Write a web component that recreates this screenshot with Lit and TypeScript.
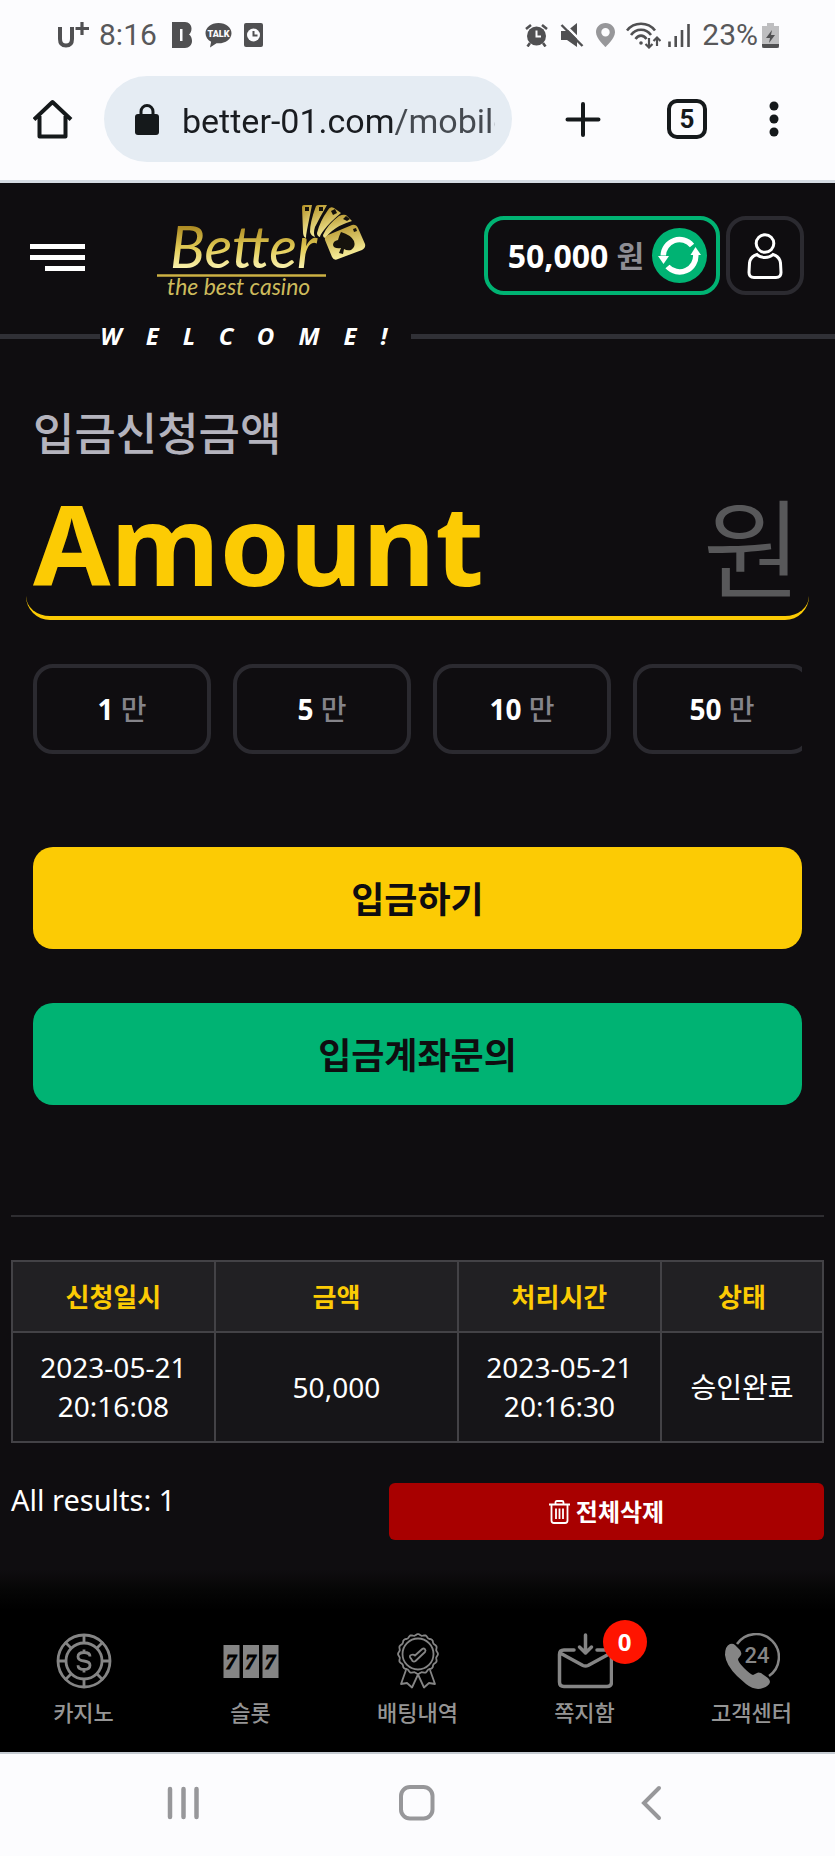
import { LitElement, html, css, svg } from "lit";
import { customElement, property, state } from "lit/decorators.js";

const FONT = css`"Noto Sans", "Noto Sans CJK KR", sans-serif`;

@customElement("phone-status")
class PhoneStatus extends LitElement {
  static styles = css`
    :host { display: block; }
    .bar {
      display: flex; align-items: center; justify-content: space-between;
      height: 70px; padding: 0 56px 0 58px; box-sizing: border-box;
      font: 400 30px/36px Roboto, sans-serif; color: #58585a;
    }
    .group { display: flex; align-items: center; }
    .carrier { margin-right: 10px; }
    .time { margin-right: 15px; }
    .b { margin-right: 13px; }
    .talk { margin-right: 12px; }
    .alarm, .mute { margin-right: 12px; }
    .pin { margin-right: 11px; }
    .wifi { margin-right: 7px; }
    .signal { margin-right: 12px; }
    .percent { margin-right: 4px; }
    svg { display: block; }
  `;
  render() {
    return html`
      <div class="bar">
        <div class="group">
          <svg class="carrier" width="31" height="26" viewBox="0 0 31 26" fill="none" stroke="#505052" stroke-width="4">
            <path d="M2 5v12c0 4 2 6.500 6 6.500s6-2.500 6-6.500V5" /><path d="M24 0v13M17.500 6.500h13.500" stroke-width="3.200" />
          </svg>
          <span class="time">8:16</span>
          <svg class="b" width="20" height="26" viewBox="0 0 20 26" fill="#505052">
            <path fill-rule="evenodd" d="M0 0h13c4 0 6.500 3 6.500 6.500 0 2.800-1 4.800-2.500 6 1.800 1.200 3 3.500 3 6.500 0 4-3 7-7 7H0zM8 7v12h2.500V7z" />
          </svg>
          <svg class="talk" width="27" height="26" viewBox="0 0 27 26">
            <path fill="#505052" d="M13.500 1C6 1 .5 5.500.5 11.200c0 3.600 2.200 6.700 5.600 8.500L5 25.500l6.500-4.300c8 1 15-3.700 15-10C26.500 5.500 21 1 13.500 1z" />
            <text x="13.500" y="15" text-anchor="middle" font-size="9" font-weight="900" font-family="Roboto, sans-serif" fill="#fcfcfe">TALK</text>
          </svg>
          <svg width="19" height="24" viewBox="0 0 19 24">
            <rect width="19" height="24" rx="2" fill="#505052" /><circle cx="9.500" cy="12" r="6.500" fill="#fcfcfe" />
            <path d="M9.500 8v4.500h4" stroke="#505052" stroke-width="2" fill="none" />
          </svg>
        </div>
        <div class="group">
          <svg class="alarm" width="23" height="24" viewBox="0 0 23 24">
            <circle cx="11.500" cy="13" r="9.500" fill="#505052" />
            <path d="M1 6l5-4M22 6l-5-4M5 20l-2.500 3.500M18 20l2.500 3.500" stroke="#505052" stroke-width="2.600" />
            <path d="M11.500 7.500v6h4.500" stroke="#fcfcfe" stroke-width="2" fill="none" />
          </svg>
          <svg class="mute" width="24" height="24" viewBox="0 0 24 24">
            <path fill="#505052" d="M1 8h6l10-8v24L7 17H1z" />
            <path d="M3 0l22 22" stroke="#fcfcfe" stroke-width="2.500" /><path d="M1.500 2l21 21" stroke="#505052" stroke-width="2.400" />
          </svg>
          <svg class="pin" width="19" height="24" viewBox="0 0 19 24">
            <path fill="#97979a" fill-rule="evenodd" d="M9.500 0C4 0 0 4 0 9.200 0 15.500 9.500 24 9.500 24S19 15.500 19 9.200C19 4 15 0 9.500 0zm0 5a4.200 4.200 0 1 1 0 8.400 4.200 4.200 0 0 1 0-8.400z" />
          </svg>
          <svg class="wifi" width="35" height="27" viewBox="0 0 35 27" fill="none" stroke="#505052" stroke-width="2.600">
            <path d="M1 8.500C8-.5 22-.5 29 8.500M5 13c5-7 15-7 20 0M9.500 17c3-4.500 8-4.500 11 0" />
            <circle cx="15" cy="21" r="1.800" fill="#505052" stroke="none" />
            <path d="M23 16v9M19.500 22l3.500 3.500 3.500-3.500M31 24v-8M27.500 19l3.500-3.500 3.500 3.500" stroke-width="2.200" />
          </svg>
          <svg class="signal" width="22" height="24" viewBox="0 0 22 24" stroke="#505052" stroke-width="2.600">
            <path d="M1.500 18.500V24M7.700 13v11M14 7v17M20.500 1v23" />
          </svg>
          <span class="percent">23%</span>
          <svg width="17" height="25" viewBox="0 0 17 25">
            <path fill="#bebec0" d="M5 0h7v3h5v22H0V3h5z" /><path fill="#505052" d="M0 21h17v2a2 2 0 0 1-2 2H2a2 2 0 0 1-2-2zM10 7l-6 8h4l-1 5 6-8H9z" />
          </svg>
        </div>
      </div>
    `;
  }
}

@customElement("browser-toolbar")
class BrowserToolbar extends LitElement {
  static styles = css`
    :host { display: block; }
    .bar {
      display: flex; align-items: center; padding: 6px 41px 18px 33px;
      border-bottom: 3px solid #d5dbe3;
    }
    button {
      display: flex; align-items: center; justify-content: center; flex: none;
      width: 40px; height: 40px; padding: 0; border: 0; background: none;
    }
    svg { display: block; }
    .address {
      display: flex; align-items: center; flex: 1; min-width: 0; height: 86px; box-sizing: border-box;
      margin: 0 51px 0 31px; padding: 0 17px 0 31px; border-radius: 43px; background: #e5ecf3;
    }
    .lock { flex: none; margin-right: 23px; }
    .url {
      flex: 1; min-width: 0; height: 54px; padding: 4px 0 0; border: 0; outline: 0; box-sizing: border-box;
      font: 400 34px/50px Roboto, sans-serif; color: transparent;
      background: linear-gradient(90deg, #191c20 212px, #454a50 212px);
      -webkit-background-clip: text; background-clip: text;
    }
    .plus { margin-right: 64px; }
    .tabs {
      box-sizing: border-box; margin-right: 47px; border: 4px solid #15191b; border-radius: 10px;
      font: 700 26px/32px Roboto, sans-serif; color: #15191b;
    }
  `;
  render() {
    return html`
      <div class="bar">
        <button aria-label="Home">
          <svg width="40" height="40" viewBox="0 0 40 40" fill="none" stroke="#15191b" stroke-width="4" stroke-linejoin="round">
            <path d="M1 20.500L19.500 3 38 20.500M6.500 17v20.500h26V17" />
          </svg>
        </button>
        <label class="address">
          <svg class="lock" width="24" height="31" viewBox="0 0 24 31">
            <rect y="10" width="24" height="21" rx="3" fill="#15191b" />
            <path d="M6 12V7.500a6 6 0 0 1 12 0V12" fill="none" stroke="#15191b" stroke-width="3" />
          </svg>
          <input class="url" type="text" aria-label="Address" .value=${"better-01.com/mobile"} />
        </label>
        <button class="plus" aria-label="New tab">
          <svg width="36" height="36" viewBox="0 0 36 36" stroke="#15191b" stroke-width="4" stroke-linecap="round"><path d="M18 3v31M2.500 18.500h31" /></svg>
        </button>
        <button class="tabs" aria-label="Open tabs">5</button>
        <button aria-label="More">
          <svg width="10" height="36" viewBox="0 0 10 36" fill="#15191b"><circle cx="5" cy="5" r="4.500" /><circle cx="5" cy="18" r="4.500" /><circle cx="5" cy="31" r="4.500" /></svg>
        </button>
      </div>
    `;
  }
}

@customElement("site-logo")
class SiteLogo extends LitElement {
  static styles = css`
    :host { display: block; padding-bottom: 9px; }
    svg { display: block; }
    .name { font: italic 400 58px "Lato", sans-serif; }
    .tag { font: italic 400 23px "Lato", sans-serif; }
  `;
  render() {
    return html`
      <svg width="210" height="98" viewBox="0 0 210 98" role="img" aria-label="Better the best casino">
        <defs>
          <linearGradient id="gold" x1="0" y1="0" x2="0" y2="1">
            <stop offset="0.200" stop-color="#a8851f" /><stop offset="0.550" stop-color="#e3cd58" /><stop offset="0.850" stop-color="#fbf4b4" />
          </linearGradient>
          <linearGradient id="card" x1="0" y1="0" x2="0.300" y2="1">
            <stop offset="0" stop-color="#b08d22" /><stop offset="1" stop-color="#f8ef9c" />
          </linearGradient>
        </defs>
        <text class="name" x="13" y="66" fill="url(#gold)">Better</text>
        <path d="M0 73.500h169" stroke="#cdb143" stroke-width="2.500" />
        <text class="tag" x="10" y="93" fill="#cdbb5c">the best casino</text>
        <g fill="url(#card)">
          <path d="M145 5q0-2 2-2h8l-5 25q-1 5-1 8-3-1-3-6z" />
          <path d="M159 4q1-1 3-1h8q-7 12-12 22-2 6 0 10-4-1-5-5 0-10 6-26z" />
          <path d="M171 8q2-4 6-2l7 5q-11 9-17 17-4 5-4 7-3-1-3-4 3-12 11-23z" />
          <path d="M182 14q4-2 7-1l6 6q-13 4-20 10-5 4-6 7-3 0-3-3 5-11 16-19z" />
          <path d="M171 33q-4 2-3 5l7 17q2 4 6 2l24-9q4-2 3-6l-7-16q-2-4-6-3z" />
        </g>
        <g fill="#15120c">
          <path d="M184 30q10 3 13 9 2 6-3 9-4 1-7-1l-1 5-4-1 2-5q-7 1-8-3 0-4 5-5 1-4 3-8z" />
          <path d="M148 5h4v4h-4zM162 5h4v4h-4zM174 9l4-2 2 4-4 2zM186 17l3-3 4 3-3 2zM196 27l3-1 1 3-3 1z" />
        </g>
      </svg>
    `;
  }
}

@customElement("site-header")
class SiteHeader extends LitElement {
  @property() balance = "50,000";
  static styles = css`
    :host { display: block; font-family: ${FONT}; }
    .row { display: flex; align-items: center; padding: 33px 31px 0 30px; height: 79px; }
    button { padding: 0; border: 0; background: none; font-family: inherit; box-sizing: border-box; }
    svg { display: block; }
    .menu { width: 55px; margin-right: 72px; padding-top: 4px; }
    .balance {
      display: flex; align-items: center; justify-content: flex-end; gap: 8px; width: 236px; height: 79px;
      margin-left: auto; margin-right: 6px; padding-right: 9px;
      border: 4px solid #00b373; border-radius: 20px; font-size: 32px; line-height: 40px; font-weight: 700; color: #fff;
    }
    .unit { font-size: 30px; color: #8e8d94; }
    .user {
      display: flex; align-items: center; justify-content: center; width: 78px; height: 79px;
      border: 4px solid #2b2a30; border-radius: 20px;
    }
    .welcome { display: flex; align-items: center; margin-top: 28px; height: 26px; }
    .welcome::before, .welcome::after { content: ""; height: 5px; background: #303036; }
    .welcome::before { width: 12%; }
    .welcome::after { flex: 1; }
    .text { font-size: 24px; line-height: 26px; font-weight: 700; font-style: italic; letter-spacing: 1em; color: #fff; }
  `;
  render() {
    return html`
      <div class="row">
        <button class="menu" aria-label="Menu">
          <svg width="55" height="27" viewBox="0 0 55 27" fill="#fff"><path d="M0 0h55v5H0zM0 11h55v5H0zM15 22h40v5H15z" /></svg>
        </button>
        <site-logo></site-logo>
        <button class="balance">
          <span>${this.balance}</span><span class="unit">원</span>
          <svg width="55" height="55" viewBox="0 0 55 55">
            <circle cx="27.500" cy="27.500" r="27.500" fill="#00b373" />
            <g fill="none" stroke="#fff" stroke-width="5.500">
              <path d="M11.300 27.500A16.200 16.200 0 0 1 40 17.500" /><path d="M43.700 26A16.200 16.200 0 0 1 15.500 38.500" />
            </g>
            <path fill="#fff" d="M6 28h11l-5.500 8zM38.500 27h10.500l-5.500-8z" />
          </svg>
        </button>
        <button class="user" aria-label="My page">
          <svg width="36" height="46" viewBox="0 0 36 46" fill="none" stroke="#fff" stroke-width="3">
            <circle cx="18" cy="10.500" r="8.800" />
            <path d="M10 21.500c-5 1.500-7 4-7.500 8.500L2 39.500c0 3.500 1.500 5 5 5h22c3.500 0 5-1.500 5-5L33.500 30c-.5-4.500-2.500-7-7.500-8.500-4 4-12 4-16 0z" />
          </svg>
        </button>
      </div>
      <div class="welcome"><span class="text">WELCOME!</span></div>
    `;
  }
}

@customElement("deposit-form")
class DepositForm extends LitElement {
  @state() private amount = "";
  private presets = [1, 5, 10, 50];
  static styles = css`
    :host { display: block; padding: 55px 26px 0; font-family: ${FONT}; }
    .title { display: block; margin: 0 7px; font-size: 45px; line-height: 60px; font-weight: 500; color: #b4b3bd; }
    .field {
      display: flex; align-items: center; height: 156px; box-sizing: border-box; padding: 6px 7px 0;
      border-bottom: 4px solid #fccb04; border-radius: 0 0 24px 24px;
    }
    .amount {
      flex: 1; min-width: 0; height: 146px; padding: 0; border: 0; outline: 0; background: none;
      font: 700 112px/146px ${FONT}; color: #fccb04;
    }
    .amount::placeholder { color: #fccb04; opacity: 1; }
    .won { font: 350 108px/146px "Noto Sans CJK KR", sans-serif; color: #58585a; }
    .presets { display: flex; gap: 22px; margin: 44px 7px 0; overflow: hidden; }
    button { border: 0; padding: 0; font-family: inherit; }
    .preset {
      flex: none; width: 178px; height: 90px; box-sizing: border-box; border: 4px solid #2b2a30; border-radius: 20px;
      background: none; font-size: 28px; line-height: 40px; font-weight: 700; color: #fff;
    }
    .man { font-weight: 500; color: #85848a; }
    .actions { display: flex; flex-direction: column; gap: 54px; margin: 93px 7px 0; }
    .action {
      height: 102px; padding-top: 4px; border-radius: 20px;
      font-size: 36px; line-height: 50px; font-weight: 700; color: #0f0d10;
    }
    .yellow { background: #fccb04; }
    .green { background: #00b373; }
  `;
  render() {
    return html`
      <label class="title" for="amount">입금신청금액</label>
      <div class="field">
        <input class="amount" id="amount" type="text" inputmode="numeric" placeholder="Amount" .value=${this.amount} />
        <span class="won">원</span>
      </div>
      <div class="presets">
        ${this.presets.map((n) => html`
          <button class="preset" @click=${() => (this.amount = (n * 10000).toLocaleString())}>${n} <span class="man">만</span></button>
        `)}
      </div>
      <div class="actions">
        <button class="action yellow">입금하기</button>
        <button class="action green">입금계좌문의</button>
      </div>
    `;
  }
}

@customElement("deposit-history")
class DepositHistory extends LitElement {
  static styles = css`
    :host { display: block; margin: 110px 11px 0; padding-top: 43px; border-top: 2px solid #2e2d31; font-family: ${FONT}; }
    table { width: 100%; border-collapse: collapse; table-layout: fixed; color: #fff; text-align: center; }
    th, td { padding: 0; border: 2px solid #434246; }
    th { height: 69px; background: #212023; font-size: 26px; line-height: 40px; font-weight: 700; color: #fccb04; }
    td { height: 108px; background: #161518; font-size: 28px; line-height: 39px; }
    .c1, .c3 { width: 25%; }
    .c2 { width: 30%; }
    .c4 { width: 20%; }
    .foot { display: flex; align-items: flex-start; justify-content: space-between; margin-top: 40px; color: #fff; }
    .count { font-size: 29px; line-height: 34px; }
    .clear {
      display: flex; align-items: center; justify-content: center; gap: 6px; width: 435px; height: 57px; padding: 0;
      border: 0; border-radius: 6px; background: #a80000; font: 700 24px/36px ${FONT}; color: #fff;
    }
    .when { padding: 0 24px; }
  `;
  render() {
    return html`
      <table>
        <colgroup><col class="c1" /><col class="c2" /><col class="c3" /><col class="c4" /></colgroup>
        <thead><tr><th>신청일시</th><th>금액</th><th>처리시간</th><th>상태</th></tr></thead>
        <tbody><tr>
          <td class="when">2023-05-21 20:16:08</td><td>50,000</td><td class="when">2023-05-21 20:16:30</td><td>승인완료</td>
        </tr></tbody>
      </table>
      <div class="foot">
        <span class="count">All results: 1</span>
        <button class="clear">
          <svg width="21" height="24" viewBox="0 0 21 24" fill="none" stroke="#fff" stroke-width="1.800">
            <path d="M0 4.500h21M6.500 4V2.500Q6.500 1 8 1h5q1.500 0 1.500 1.500V4M2.500 5v15.500Q2.500 23 5 23h11q2.500 0 2.500-2.500V5M7 8.500v10.500M10.500 8.500v10.500M14 8.500v10.500" />
          </svg>
          전체삭제
        </button>
      </div>
    `;
  }
}

const scallop = (() => {
  const pts: string[] = [];
  for (let i = 0; i <= 96; i++) {
    const a = (i / 96) * Math.PI * 2;
    const r = 19.3 + 0.7 * Math.cos(a * 16);
    pts.push(`${(28 + r * Math.cos(a)).toFixed(1)} ${(21 + r * Math.sin(a)).toFixed(1)}`);
  }
  return "M" + pts.join("L") + "Z";
})();

const icons = {
  chip: svg`
    <g fill="none" stroke="#858585" stroke-width="2.800">
      <circle cx="28" cy="28" r="26" /><circle cx="28" cy="28" r="18" />
      <path d="M28 1v9M28 46v9M1 28h9M46 28h9M9 9l6 6M41 41l6 6M9 47l6-6M41 15l6-6" />
      <path d="M34 23.500c0-3-2-4-6-4s-6 1.500-6 4.200 2 3.800 6 4.300 6 1.700 6 4.300-2 4.200-6 4.200-6-1.200-6-4.200M28 16.500V20M28 36v3.500" />
    </g>`,
  slot: svg`
    <path fill="#858585" d="M0.500 12h16v33h-16zM20 12h16v33h-16zM39.500 12h16v33h-16z" />
    <g font-family="'Liberation Serif', serif" font-size="21" font-weight="700" font-style="italic" text-anchor="middle" fill="#000" stroke="#000">
      <text x="8" y="36">7</text><text x="27.500" y="36">7</text><text x="47" y="36">7</text>
    </g>`,
  award: svg`
    <g fill="none" stroke="#858585" stroke-width="1.800" stroke-linejoin="round">
      <path d="${scallop}" /><circle cx="28" cy="21" r="15.500" />
      <path d="M16 37L11 51l6-1 5 4.500 6-13M40 37l5 14-6-1-5 4.500-6-13" />
      <path d="M21 22c-1.500.5-1.500 2 0 3.500l1.500 2.500c1 .8 2 .8 3 0l9.500-9c1.500-2-.8-4.500-2.800-3L25 22.500c-1-1-2.500-1.200-4-.5z" />
    </g>`,
  mail: svg`
    <g fill="none" stroke="#858585" stroke-width="3.500" stroke-linecap="round" stroke-linejoin="round">
      <path d="M17 17H7q-4.500 0-4.500 4.500V49q0 4.500 4.500 4.500h43q4.500 0 4.500-4.500V21.500Q54.500 17 50 17H40M4 20.500l22 12q2.500 1.200 5 0l22-12" />
      <path d="M28.500 2v17M22.500 14l6 6 6-6" />
    </g>`,
  call: svg`
    <path d="M13 11A23 23 0 1 1 45 43" fill="none" stroke="#858585" stroke-width="2.500" />
    <path fill="#858585" d="M6 11q-5 2-5 11 1 10 12 21l9 8q9 7 17 4 6-2 7-6 0-2-2-4l-7-5q-3-1-4 0l-4 2q-3-1-9-7t-6-9l3-4q1-2-1-5l-5-5q-2-2-5-1z" />
    <text x="33" y="30" text-anchor="middle" font-family="Roboto, sans-serif" font-size="22" font-weight="500" fill="#858585">24</text>`,
};

@customElement("bottom-nav")
class BottomNav extends LitElement {
  private items = [
    { label: "카지노", icon: icons.chip },
    { label: "슬롯", icon: icons.slot },
    { label: "배팅내역", icon: icons.award },
    { label: "쪽지함", icon: icons.mail, badge: "0" },
    { label: "고객센터", icon: icons.call },
  ];
  static styles = css`
    :host { display: block; margin-top: 30px; font-family: ${FONT}; }
    nav {
      display: grid; grid-template-columns: repeat(5, 1fr); padding: 63px 0 24px;
      background: linear-gradient(#0f0d10, #060606 20px, #000 40px);
      border-bottom: 2px solid #c5cbd2;
    }
    a { display: flex; flex-direction: column; align-items: center; color: #959595; text-decoration: none; }
    .icon { position: relative; display: block; width: 56px; height: 56px; }
    .label { margin-top: 7px; font-size: 22px; line-height: 32px; font-weight: 500; }
    .badge {
      position: absolute; top: -13px; right: -34px; width: 44px; height: 44px; border-radius: 50%;
      background: #ff1400; color: #fff; font-size: 24px; line-height: 44px; font-weight: 700; text-align: center;
    }
  `;
  render() {
    return html`
      <nav>
        ${this.items.map((it) => html`
          <a href="#">
            <span class="icon">
              <svg width="56" height="56" viewBox="0 0 56 56">${it.icon}</svg>
              ${it.badge ? html`<span class="badge">${it.badge}</span>` : ""}
            </span>
            <span class="label">${it.label}</span>
          </a>
        `)}
      </nav>
    `;
  }
}

@customElement("system-nav")
class SystemNav extends LitElement {
  static styles = css`
    :host { display: block; }
    .bar { display: grid; grid-template-columns: repeat(3, 28%); justify-content: center; height: 98px; padding-bottom: 5px; align-items: center; }
    button { display: flex; justify-content: center; padding: 0; border: 0; background: none; }
    svg { display: block; }
  `;
  render() {
    return html`
      <div class="bar">
        <button aria-label="Recent apps">
          <svg width="33" height="36" viewBox="0 0 33 36" stroke="#97979a" stroke-width="4.500" stroke-linecap="round"><path d="M3 4v28M16.500 4v28M29.500 4v28" /></svg>
        </button>
        <button aria-label="Home screen">
          <svg width="36" height="36" viewBox="0 0 36 36" fill="none" stroke="#97979a" stroke-width="4"><rect x="2" y="2" width="31.500" height="31.500" rx="9" /></svg>
        </button>
        <button aria-label="Back">
          <svg width="22" height="36" viewBox="0 0 22 36" fill="none" stroke="#97979a" stroke-width="4" stroke-linecap="round"><path d="M19 3L4 18l15 15" /></svg>
        </button>
      </div>
    `;
  }
}

@customElement("app-root")
class AppRoot extends LitElement {
  static styles = css`
    :host { display: block; background: #fcfcfe; }
    .page { background: #0f0d10; }
  `;
  render() {
    return html`
      <phone-status></phone-status>
      <browser-toolbar></browser-toolbar>
      <main class="page">
        <site-header></site-header>
        <deposit-form></deposit-form>
        <deposit-history></deposit-history>
        <bottom-nav></bottom-nav>
      </main>
      <system-nav></system-nav>
    `;
  }
}
